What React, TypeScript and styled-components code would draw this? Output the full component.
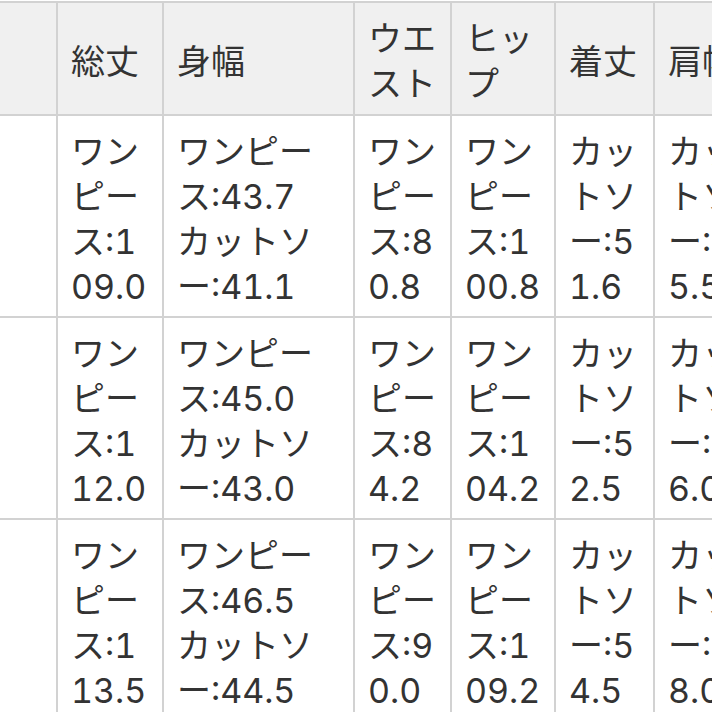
import React from "react";
import styled, { createGlobalStyle } from "styled-components";

const GlobalStyle = createGlobalStyle`
  html, body {
    margin: 0;
    padding: 0;
    background: #fff;
  }
  body {
    font-family: "Inter", "Noto Sans CJK JP", sans-serif;
    color: #333;
  }
`;

const Viewport = styled.div`
  width: 712px;
  height: 712px;
  overflow: hidden;
  background: #fff;
`;

const SizeTable = styled.table`
  margin-top: 1px;
  border-collapse: separate;
  border-spacing: 0;
  table-layout: fixed;
  width: 805px;
  font-size: 34px;
  line-height: 45px;
  font-variant-numeric: tabular-nums;
`;

const HeadRow = styled.tr`
  height: 115px;
`;

const BodyRow = styled.tr`
  height: 202px;
`;

const HeadCell = styled.th`
  background: #f0f0f0;
  border-top: 2px solid #d2d2d2;
  border-right: 2px solid #d2d2d2;
  border-bottom: 2px solid #d2d2d2;
  padding: 5px 0 0 13px;
  font-weight: 400;
  text-align: left;
  vertical-align: middle;
`;

const Cell = styled.td`
  border-right: 2px solid #d2d2d2;
  border-bottom: 2px solid #d2d2d2;
  padding: 13px 0 0 13px;
  vertical-align: top;
`;

const Line = styled.span`
  display: block;
  white-space: nowrap;
`;

const columns: { title: string[]; width: number }[] = [
  { title: [], width: 58 },
  { title: ["総丈"], width: 106 },
  { title: ["身幅"], width: 191 },
  { title: ["ウエ", "スト"], width: 97 },
  { title: ["ヒッ", "プ"], width: 104 },
  { title: ["着丈"], width: 99 },
  { title: ["肩幅"], width: 150 },
];

const rows: string[][][] = [
  [
    [],
    ["ワン", "ピー", "ス:1", "09.0"],
    ["ワンピー", "ス:43.7", "カットソ", "ー:41.1"],
    ["ワン", "ピー", "ス:8", "0.8"],
    ["ワン", "ピー", "ス:1", "00.8"],
    ["カッ", "トソ", "ー:5", "1.6"],
    ["カッ", "トソ", "ー:3", "5.5"],
  ],
  [
    [],
    ["ワン", "ピー", "ス:1", "12.0"],
    ["ワンピー", "ス:45.0", "カットソ", "ー:43.0"],
    ["ワン", "ピー", "ス:8", "4.2"],
    ["ワン", "ピー", "ス:1", "04.2"],
    ["カッ", "トソ", "ー:5", "2.5"],
    ["カッ", "トソ", "ー:3", "6.0"],
  ],
  [
    [],
    ["ワン", "ピー", "ス:1", "13.5"],
    ["ワンピー", "ス:46.5", "カットソ", "ー:44.5"],
    ["ワン", "ピー", "ス:9", "0.0"],
    ["ワン", "ピー", "ス:1", "09.2"],
    ["カッ", "トソ", "ー:5", "4.5"],
    ["カッ", "トソ", "ー:3", "8.0"],
  ],
];

const Lines: React.FC<{ lines: string[] }> = ({ lines }) => (
  <>
    {lines.map((text, i) => (
      <Line key={i}>{text}</Line>
    ))}
  </>
);

const App: React.FC = () => {
  return (
    <Viewport>
      <GlobalStyle />
      <SizeTable>
        <colgroup>
          {columns.map((col, i) => (
            <col key={i} style={{ width: col.width }} />
          ))}
        </colgroup>
        <thead>
          <HeadRow>
            {columns.map((col, i) => (
              <HeadCell key={i}>
                <Lines lines={col.title} />
              </HeadCell>
            ))}
          </HeadRow>
        </thead>
        <tbody>
          {rows.map((row, r) => (
            <BodyRow key={r}>
              {row.map((cell, c) => (
                <Cell key={c}>
                  <Lines lines={cell} />
                </Cell>
              ))}
            </BodyRow>
          ))}
        </tbody>
      </SizeTable>
    </Viewport>
  );
};

export default App;
